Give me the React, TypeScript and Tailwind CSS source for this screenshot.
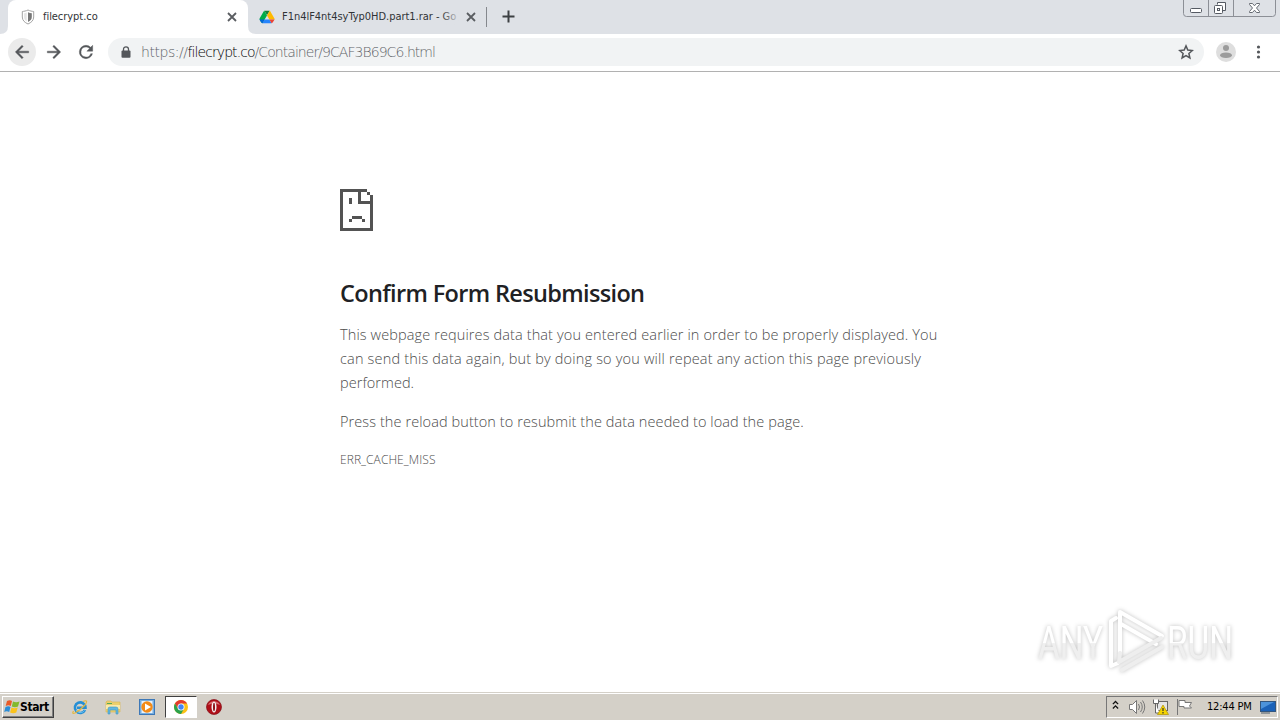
import type { ReactNode } from "react";

const uiFont = "font-['DejaVu_Sans_Condensed','DejaVu_Sans',sans-serif]";

const paragraph = [
  { text: "This webpage requires data that you entered earlier in order to be properly displayed. You", className: "tracking-[0.12px]" },
  { text: "can send this data again, but by doing so you will repeat any action this page previously", className: "tracking-[0.18px]" },
  { text: "performed.", className: "tracking-[0.05px]" },
];

function CloseIcon() {
  return (
    <svg className="h-[10px] w-[10px] shrink-0" viewBox="0 0 10 10" stroke="#5a5d61" strokeWidth="1.8">
      <path d="M1 1l8 8M9 1l-8 8" />
    </svg>
  );
}

function ShieldIcon() {
  return (
    <svg className="h-4 w-4 shrink-0" viewBox="0 0 16 16">
      <path d="M8 1C6 2 4 2.300 2.300 2.500V8c0 3.500 2.500 5.500 5.700 7 3.200-1.500 5.700-3.500 5.700-7V2.500C12 2.300 10 2 8 1Z" fill="#fff" stroke="#a3a3a3" />
      <path d="M8 3.200c1.300.6 2.500.8 3.800 1V8c0 2.500-1.500 3.900-3.800 5Z" fill="#777" />
      <path d="M6.700 3.500c-1 .4-1.800.6-2.600.7V8c0 2 .9 3.300 2.600 4.400Z" fill="#e4e4e4" />
    </svg>
  );
}

function DriveIcon() {
  return (
    <svg className="h-4 w-4 shrink-0" viewBox="0 0 16 16">
      <path d="M5.300 1.700h5.400L8 6.300Z" fill="#188038" />
      <path d="M5.300 1.700 8 6.400 3.400 14.300Q2.500 14 2 13L.7 10.800q-.4-.8 0-1.600L4.600 2.400Z" fill="#00ac47" />
      <path d="M10.700 1.700 8 6.400l2.400 4h5.200q0-.6-.3-1.200l-3.900-6.800Z" fill="#ffba00" />
      <path d="M5.600 10.400 3.400 14.300h9.200l-2.200-3.900Z" fill="#2684fc" />
      <path d="M.4 10.400h5.200l-2.200 3.900Q2.500 14 2 13Z" fill="#0066da" />
      <path d="M10.400 10.400h5.200L14 13q-.5 1-1.400 1.300Z" fill="#ea4335" />
    </svg>
  );
}

function WindowButtons() {
  return (
    <svg className="absolute right-[3px] top-0 h-[18px] w-[95px]" viewBox="0 0 95 18" fill="none">
      <path d="M1.500 0v13.500q0 3 3 3h86q3 0 3-3V0M26.500 0v16M51.500 0v16" stroke="#8c8f96" />
      <rect x="8.500" y="8.500" width="11" height="4" rx="1" fill="#fff" stroke="#555a63" />
      <path d="M35.500 4.500v-2h8v8h-3" fill="#fff" stroke="#555a63" />
      <rect x="32.500" y="5.500" width="8" height="8" rx="1" fill="#fff" stroke="#555a63" />
      <rect x="35.500" y="8.500" width="2" height="2" stroke="#555a63" />
      <path d="M67.500 3.500h3l2 2.300 2-2.300h3v1L74.500 8l3 3.500v1h-3l-2-2.300-2 2.300h-3v-1l3-3.500-3-3.500Z" fill="#fff" stroke="#666b73" />
    </svg>
  );
}

function TabStrip() {
  return (
    <div className={`relative flex h-[34px] shrink-0 bg-[#dee1e6] pl-2 text-[11px] text-[#303336] ${uiFont}`}>
      <div className="relative flex h-full w-[240px] items-center rounded-t-lg bg-white pl-3">
        <svg className="absolute -left-2 bottom-0 h-2 w-2" viewBox="0 0 8 8">
          <path d="M8 0v8H0q8 0 8-8" fill="#fff" />
        </svg>
        <svg className="absolute -right-2 bottom-0 h-2 w-2" viewBox="0 0 8 8">
          <path d="M0 0v8h8q-8 0-8-8" fill="#fff" />
        </svg>
        <ShieldIcon />
        <span className="ml-[7px] w-[184px] tracking-[-0.05px]">filecrypt.co</span>
        <CloseIcon />
      </div>
      <div className="flex h-full w-[239px] items-center pl-[11px]">
        <DriveIcon />
        <div className="relative ml-[7px] w-[175px] whitespace-nowrap tracking-[-0.03px]">
          F1n4lF4nt4syTyp0HD.part1.rar - Go
          <span className="absolute inset-y-0 -right-1 w-5 bg-linear-to-r from-transparent to-[#dee1e6]" />
        </div>
        <span className="ml-[9px] flex">
          <CloseIcon />
        </span>
        <span className="ml-[10px] h-5 w-px bg-[#85888d]" />
      </div>
      <svg className="ml-[15px] mt-[10px] h-[13px] w-[13px]" viewBox="0 0 13 13" stroke="#3c4043" strokeWidth="2">
        <path d="M6.500.5v12M.5 6.500h12" />
      </svg>
      <WindowButtons />
    </div>
  );
}

function NavIcon({ children }: { children: ReactNode }) {
  return (
    <svg className="h-5 w-5" viewBox="0 0 24 24" fill="#54575b">
      {children}
    </svg>
  );
}

function Toolbar() {
  return (
    <div className="flex h-[38px] shrink-0 items-center border-b border-[#b1b1b1] bg-white pb-px pl-2">
      <div className="flex h-7 w-7 items-center justify-center rounded-full bg-[#ebebeb]">
        <NavIcon>
          <path d="M20 11H7.830l5.590-5.590L12 4l-8 8 8 8 1.410-1.410L7.830 13H20z" stroke="#54575b" strokeWidth=".5" />
        </NavIcon>
      </div>
      <div className="ml-2">
        <NavIcon>
          <path d="M12 4l-1.410 1.410L16.170 11H4v2h12.170l-5.580 5.590L12 20l8-8z" stroke="#54575b" strokeWidth=".5" />
        </NavIcon>
      </div>
      <div className="ml-3">
        <NavIcon>
          <path d="M17.650 6.350A7.960 7.960 0 0 0 12 4a8 8 0 1 0 7.730 10h-2.080A6 6 0 1 1 12 6c1.660 0 3.140.69 4.220 1.780L13 11h7V4z" stroke="#54575b" strokeWidth=".5" />
        </NavIcon>
      </div>
      <div className="ml-3 flex h-7 w-[1096px] items-center rounded-full bg-[#f1f3f4] pl-[13px]">
        <svg className="h-3 w-[10px]" viewBox="0 0 10 12">
          <path d="M2.500 5V3.300a2.500 2.500 0 0 1 5 0V5" fill="none" stroke="#54575b" strokeWidth="1.300" />
          <rect x=".5" y="4.500" width="9" height="7.300" rx="1" fill="#54575b" />
        </svg>
        <span className="ml-[10px] flex-1 whitespace-nowrap font-['DejaVu_Sans',sans-serif] text-[14px] font-extralight text-[#5f6368]">
          <span className="tracking-[-0.45px]">https://</span>
          <span className="tracking-[-0.93px] text-black">filecrypt.co</span>
          <span className="tracking-[-0.95px]">/Container/9CAF3B69C6.html</span>
        </span>
        <svg className="mr-[10px] h-4 w-4" viewBox="0 0 16 16" fill="none" stroke="#54575b" strokeWidth="1.500">
          <path d="M8 1.900l1.800 4.200 4.500.4-3.400 3 1 4.500L8 11.600 4.100 14l1-4.500-3.400-3 4.500-.4Z" />
        </svg>
      </div>
      <svg className="ml-3 h-5 w-5" viewBox="0 0 20 20">
        <circle cx="10" cy="10" r="10" fill="#dedede" />
        <circle cx="10" cy="6" r="3" fill="#9b9b9b" />
        <ellipse cx="10" cy="13.300" rx="6" ry="2.800" fill="#9b9b9b" />
      </svg>
      <svg className="ml-[19px] h-4 w-[6px]" viewBox="0 0 6 16" fill="#54575b">
        <circle cx="3.500" cy="3" r="1.600" />
        <circle cx="3.500" cy="8" r="1.600" />
        <circle cx="3.500" cy="13" r="1.600" />
      </svg>
    </div>
  );
}

function SadPage() {
  return (
    <svg className="h-[42px] w-[33px]" viewBox="0 0 33 42" fill="#535353" shapeRendering="crispEdges">
      <path d="M0 0h27v3H3v36h27V15H18V3h3v9h9V9h3v33H0ZM27 3h3v3h-3ZM30 6h3v3h-3ZM9 9h3v6H9ZM12 27h9v3h-9ZM9 30h3v3H9ZM22 30h3v3h-3ZM21 27h1v3h-1Z" />
    </svg>
  );
}

function Watermark() {
  return (
    <svg className="absolute left-[1030px] top-[534px] h-[70px] w-[230px] drop-shadow-[0_0_2px_rgba(0,0,0,0.25)]" viewBox="0 0 230 70">
      <defs>
        <linearGradient id="fade" x2="0" y2="1">
          <stop offset=".5" stopColor="#fff" />
          <stop offset=".52" stopColor="#efefef" />
        </linearGradient>
      </defs>
      <g className="font-['Roboto',sans-serif]" fontSize="47" fontWeight="400" fill="url(#fade)">
        <text x="8" y="53" textLength="65" lengthAdjust="spacingAndGlyphs">ANY</text>
        <text x="137" y="53" textLength="66" lengthAdjust="spacingAndGlyphs">RUN</text>
      </g>
      <g fill="none" stroke="#fff" strokeWidth="4" strokeLinejoin="round" strokeLinecap="round">
        <path d="M90 47V6l42 24" />
        <path d="M86 12l-5 3v45l7-3" />
        <path d="M91 18l35 20" />
        <path d="M90 47l-1 9 42-24M92 64l40-23" stroke="#eee" />
      </g>
    </svg>
  );
}

function ErrorPage() {
  return (
    <main className="relative flex-1 bg-white pl-[340px] pt-[117px] font-['Open_Sans',sans-serif] text-[14.5px] leading-6 text-[#4c4c4c]">
      <SadPage />
      <h1 className="mt-[48px] text-[23.5px] font-semibold leading-[28px] tracking-[-0.65px] text-[#202124]">
        Confirm Form Resubmission
      </h1>
      <p className="mt-4 whitespace-nowrap font-light">
        {paragraph.map((line) => (
          <span key={line.text} className={`block ${line.className}`}>
            {line.text}
          </span>
        ))}
      </p>
      <p className="mt-[15px] font-light tracking-[0.09px]">
        Press the reload button to resubmit the data needed to load the page.
      </p>
      <p className="mt-[14px] text-[12px] font-light tracking-[0.07px]">ERR_CACHE_MISS</p>
      <Watermark />
    </main>
  );
}

function WindowsFlag() {
  return (
    <svg className="h-4 w-4" viewBox="0 0 16 16">
      <path d="M3 2q3-1.500 5 0L6.800 7Q4.500 5.500 1.700 7Z" fill="#ea5b27" />
      <path d="M9 2.500q3 1.500 6.500 0L14 7.500q-3 1.500-6.200 0Z" fill="#82b92c" />
      <path d="M1.500 8q3-1.500 5 0L5.200 13q-2.500-1.500-5 0Z" fill="#2b8dd6" />
      <path d="M7.500 8.500q3 1.500 6.200 0l-1.400 5q-3 1.500-6.200 0Z" fill="#fbc31b" />
    </svg>
  );
}

function ExplorerIcon() {
  return (
    <svg className="h-4 w-4" viewBox="0 0 16 16" fill="none">
      <path d="M13 11A5.300 5.300 0 1 1 13.500 8.800H5" stroke="#258fd5" strokeWidth="2.600" />
      <path d="M12.500 11.500A5 5 0 0 1 4 11" stroke="#72c6f4" />
      <path d="M1.500 12Q-.5 15.500 3 14 8 11.500 13 6q4-6-2-3.500" stroke="#e5b63c" strokeWidth="1.200" />
    </svg>
  );
}

function FolderIcon() {
  return (
    <svg className="h-4 w-4" viewBox="0 0 16 16">
      <path d="M1 3l1-1h4l1 1h8v10H1Z" fill="#edcf6c" stroke="#d9b95b" strokeWidth=".7" />
      <path d="M2 4h5v1H2Z" fill="#57a957" />
      <path d="M1 6h14v4H1Z" fill="#f9eaab" />
      <path d="M3 15V10q0-2 2-2h6q2 0 2 2v5h-2v-4H5v4Z" fill="#63b7df" stroke="#4297c5" strokeWidth=".6" />
    </svg>
  );
}

function PlayerIcon() {
  return (
    <svg className="h-4 w-4" viewBox="0 0 16 16">
      <rect x=".5" y=".5" width="15" height="15" fill="#76aee0" stroke="#3d78b7" />
      <rect x="2.500" y="2" width="11" height="12" fill="#e8f2fc" />
      <circle cx="8" cy="8" r="5.700" fill="#f38b18" />
      <path d="M6 4.500v7L12 8Z" fill="#fff" />
    </svg>
  );
}

function ChromeIcon() {
  return (
    <svg className="h-4 w-4" viewBox="0 0 16 16">
      <circle cx="8" cy="8" r="7" fill="#fbc116" />
      <path d="M1.940 4.500A7 7 0 0 1 14.060 4.500H8L5 9.750Z" fill="#e33b2e" />
      <path d="M1.940 4.500A7 7 0 0 0 8 15l3-5.250H5Z" fill="#2ba24c" />
      <circle cx="8" cy="8" r="3.500" fill="#fff" />
      <circle cx="8" cy="8" r="2.700" fill="#4285f4" />
    </svg>
  );
}

function OperaIcon() {
  return (
    <svg className="h-4 w-4" viewBox="0 0 16 16">
      <circle cx="8" cy="8" r="7.500" fill="#af1019" stroke="#851018" strokeWidth=".7" />
      <path d="M2 6a6.500 6 0 0 1 12 0Q8 3 2 6Z" fill="#d76c70" />
      <ellipse cx="8" cy="8" rx="2.500" ry="5.500" fill="#f4f4f4" />
      <ellipse cx="8" cy="8" rx="1" ry="4.300" fill="#8c1118" />
    </svg>
  );
}

function SystemTray() {
  return (
    <div className="ml-auto mr-[2px] flex h-[22px] w-[172px] items-center border border-b-white border-l-[#777] border-r-white border-t-[#777] pl-[5px]">
      <svg className="mb-1 h-[10px] w-[7px]" viewBox="0 0 8 10" fill="none" stroke="#111" strokeWidth="1.500">
        <path d="M1 4l3-3 3 3M1 9l3-3 3 3" />
      </svg>
      <svg className="ml-[9px] h-4 w-[18px]" viewBox="0 0 18 16" fill="none" stroke="#777">
        <path d="M1.500 5.500h3l4-4v13l-4-4h-3Z" fill="#fff" />
        <path d="M10.500 5q2 3 0 6M12.500 3q3.500 5 0 10M14.500 1.500q4.500 6.500 0 13" />
      </svg>
      <svg className="ml-[6px] h-4 w-[17px]" viewBox="0 0 17 16">
        <rect x="5.500" y="2.500" width="10" height="9" fill="#e5e5e5" stroke="#666" />
        <path d="M1.500 .5v4h5v-4M3.500 5v9h4" fill="#fff" stroke="#666" />
        <path d="M11 6l5.500 9.500h-11Z" fill="#f5d500" stroke="#b09200" strokeWidth=".7" />
        <path d="M11 9v3M11 13v1.500" stroke="#333" strokeWidth="1.200" />
      </svg>
      <svg className="ml-[7px] h-4 w-[17px]" viewBox="0 0 17 16">
        <path d="M1.500 0v16M3 1.500h6v2h6.500l-2 3.500 2 2H8V7.500H3Z" fill="#fff" stroke="#777" />
      </svg>
      <span className={`ml-[14px] whitespace-nowrap text-[11px] tracking-[-0.2px] text-black ${uiFont}`}>
        12:44 PM
      </span>
      <svg className="ml-auto mr-px h-[13px] w-4" viewBox="0 0 16 13">
        <rect x=".5" y=".5" width="15" height="10" fill="#1b62b8" stroke="#33567e" />
        <path d="M1 1h13L1 8Z" fill="#4c93db" />
        <path d="M1 12h9" stroke="#4b5a6b" />
      </svg>
    </div>
  );
}

function Taskbar() {
  return (
    <footer className="flex h-[28px] shrink-0 items-center border-t border-[#d4d0c8] bg-[#d4d0c8] pb-px pl-[2px] pt-[2px] shadow-[inset_0_1px_0_#fff]">
      <div className="flex h-[22px] w-[52px] items-center border border-b-[#404040] border-l-white border-r-[#404040] border-t-white pl-px shadow-[inset_-1px_-1px_0_#808080]">
        <WindowsFlag />
        <span className={`text-[12px] font-bold tracking-[-0.4px] text-black ${uiFont}`}>Start</span>
      </div>
      <div className="ml-[18px]"><ExplorerIcon /></div>
      <div className="ml-[17px]"><FolderIcon /></div>
      <div className="ml-[18px]"><PlayerIcon /></div>
      <div className="ml-[10px] flex h-[22px] w-8 items-center justify-center border border-b-white border-l-[#404040] border-r-white border-t-[#404040] bg-white">
        <ChromeIcon />
      </div>
      <div className="ml-[9px]"><OperaIcon /></div>
      <SystemTray />
    </footer>
  );
}

export default function App() {
  return (
    <div className="flex h-[720px] w-[1280px] flex-col overflow-hidden">
      <TabStrip />
      <Toolbar />
      <ErrorPage />
      <Taskbar />
    </div>
  );
}
